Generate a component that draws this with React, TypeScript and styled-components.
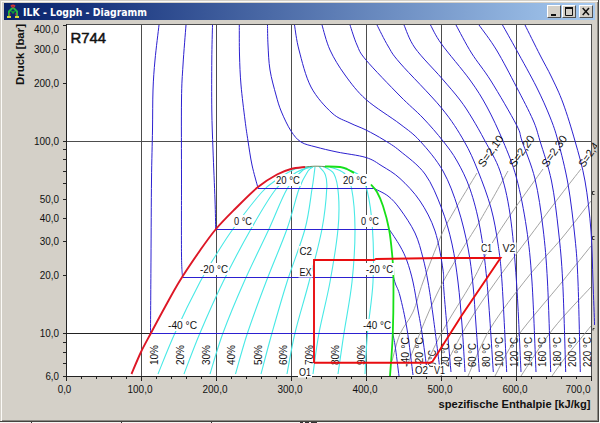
import React from 'react';
import styled, { createGlobalStyle } from 'styled-components';

const GlobalStyle = createGlobalStyle`
  html, body { margin: 0; padding: 0; }
  body { width: 600px; height: 423px; overflow: hidden; background: #f6f5f2; font-family: 'Liberation Sans', Arial, sans-serif; }
`;

const Desktop = styled.main`
  display: flex;
  flex-direction: column;
  width: 600px;
  height: 423px;
`;

const WindowFrame = styled.section`
  box-sizing: border-box;
  display: flex;
  flex-direction: column;
  width: 599px;
  height: 422px;
  padding: 2px 2px 0 3px;
  background: #d4d0c8;
  border-right: 1px solid #45433f;
  border-bottom: 1px solid #45433f;
  box-shadow: inset 1px 1px 0 #d4d0c8, inset 2px 2px 0 #fbfaf7, inset -1px -1px 0 #8c8983;
`;

const TitleBar = styled.header`
  box-sizing: border-box;
  display: flex;
  align-items: center;
  height: 17px;
  margin: 1px 1px 0;
  padding: 0 2px 0 3px;
  background: linear-gradient(90deg, #0a246a 0%, #14307a 12%, #a6caf0 100%);
`;

const Title = styled.h1`
  flex: 1;
  margin: 0 0 0 4px;
  color: #fff;
  font: bold 10px/16px 'DejaVu Sans', sans-serif;
`;

const TitleText = styled.svg`
  display: block;
  width: 140px;
  height: 16px;
`;

const Controls = styled.div`
  display: flex;
`;

const ControlButton = styled.button<{ $gap?: boolean }>`
  box-sizing: border-box;
  display: flex;
  width: 14px;
  height: 13px;
  margin: 0 0 0 ${(p) => (p.$gap ? '3px' : '1px')};
  padding: 0;
  border: 1px solid;
  border-color: #fff #505050 #505050 #fff;
  background: #d4d0c8;
`;

const Chart = styled.svg`
  display: block;
  width: 594px;
  height: 400px;
`;

const Footer = styled.svg`
  display: block;
  width: 600px;
  height: 1px;
`;

type Pt = [number, number];

/* Catmull-Rom spline through the sampled state points. */
const smooth = (pts: Pt[]): string => {
  let d = `M${pts[0][0]} ${pts[0][1]}`;
  for (let i = 0; i < pts.length - 1; i++) {
    const a = pts[i - 1] ?? pts[i];
    const b = pts[i];
    const c = pts[i + 1];
    const e = pts[i + 2] ?? c;
    d += `C${b[0] + (c[0] - a[0]) / 6} ${b[1] + (c[1] - a[1]) / 6} ${c[0] - (e[0] - b[0]) / 6} ${c[1] - (e[1] - b[1]) / 6} ${c[0]} ${c[1]}`;
  }
  return d;
};

const isotherms: Pt[][] = [
  [[159, 25], [155, 60], [153, 90], [152.5, 130], [151.5, 180], [151, 258], [150.5, 333]],
  [[186, 25], [183, 65], [181.5, 100], [181.5, 180], [181.5, 255], [182.5, 277]],
  [[212.5, 25], [211.8, 60], [211.8, 110], [213, 150], [215, 200], [215.7, 229]],
  [[239.3, 25], [239.5, 55], [241, 85], [245, 120], [248, 141], [252, 165], [258, 188]],
  [[267.5, 25], [268, 45], [270, 70], [276, 95], [281.5, 112], [291, 131], [301, 142], [316, 147], [337, 152], [366, 157.5], [382, 166], [400, 178.5], [420, 201], [435, 231], [443, 270], [444, 292], [451, 372]],
  [[294.5, 25], [299, 50], [311, 87], [332, 113], [350, 123], [366, 130], [384, 140], [400, 151], [425, 174], [441.5, 208], [452, 244], [458, 282], [462, 325], [465, 372]],
  [[322, 25], [330, 50], [345, 75], [366, 99.5], [400, 124], [420, 141], [443, 171], [458, 208], [468, 248], [473, 285], [476, 325], [479.3, 372]],
  [[350, 25], [357, 45], [366, 60], [400, 96], [423, 118], [443, 141], [457, 161], [470, 189], [480, 228], [487, 282], [493.3, 372]],
  [[377, 25], [388, 46], [400, 63], [441.5, 108], [464, 141], [478, 171], [491, 208], [498, 244], [502, 282], [506.7, 372]],
  [[404, 25], [415, 48], [441.5, 78], [460, 100], [472, 118], [485, 141], [500, 171], [510, 214], [516.5, 282], [521, 372]],
  [[430.5, 25], [441.5, 44], [470, 80], [487, 107], [503, 141], [516.5, 178], [526.5, 228], [532, 282], [536, 372]],
  [[456, 25], [471.5, 53], [491, 81], [516.5, 125], [522, 141], [535, 179], [543, 228], [547.5, 282], [550.7, 372]],
  [[479, 25], [496.5, 50], [516.5, 87], [533, 120], [540, 141], [551.5, 181], [558.5, 231], [562.7, 282], [565.7, 372]],
  [[502.5, 25], [516.5, 50], [536.5, 87], [550, 117], [558, 141], [568, 184], [575, 238], [578, 282], [580.3, 372]],
  [[525, 25], [540, 55], [551.5, 77], [563, 103], [575, 141], [585, 181], [591, 231], [593, 282], [594.6, 325]],
  [[373, 188], [388, 196], [400, 209], [415, 233], [423, 258], [428, 282], [433, 315], [440, 370]],
  [[389, 229], [400, 246], [407, 261], [413, 282], [418, 310], [422, 333], [427, 370]],
  [[393.5, 277], [395.5, 284], [400, 296], [407, 329], [413, 375]],
  [[392.5, 333], [395, 345], [399, 376]],
];

const qualities: Pt[][] = [
  [[309, 167], [295, 169], [278, 179], [262, 192], [233, 229], [216, 255], [200, 282], [175, 333], [158, 374]],
  [[311, 167], [297, 172], [276, 189], [251, 229], [223, 282], [200, 333], [184, 374]],
  [[312, 167], [303, 170], [287, 189], [269, 229], [244, 282], [223, 333], [210, 374]],
  [[313, 167], [308, 171], [299, 189], [287, 229], [266, 282], [247.5, 333], [235.5, 374]],
  [[315, 167], [314, 175], [312, 189], [305, 229], [287, 282], [272, 333], [261, 374]],
  [[319, 166.5], [325, 174], [326.8, 188], [322, 229], [309, 282], [295, 333], [287, 374]],
  [[323, 166.5], [334, 174], [338.5, 195], [338, 229], [330, 282], [319, 333], [313, 374]],
  [[330, 167], [344, 173], [351.5, 188], [355, 229], [352, 282], [344, 333], [338, 374]],
  [[340, 167], [359, 175], [367, 190], [372.5, 229], [373, 282], [367.5, 333], [365, 374]],
];

const isentropes: Pt[][] = [
  [[477, 173], [453, 213], [441, 236], [423, 282], [413, 312], [400, 334], [392, 361]],
  [[508, 171], [481, 219], [463, 248], [443, 282], [427, 316], [407, 366]],
  [[543, 169], [513, 211], [491, 245], [472, 282], [442, 332], [421, 376]],
  [[581, 169], [560, 196], [530, 236], [497, 280], [467, 325], [440, 376]],
  [[591, 201], [562, 238], [528, 277], [490, 329], [468, 376]],
  [[591, 246], [562, 282], [517, 337], [495, 376]],
  [[591, 287], [553, 329], [521, 376]],
  [[591, 326], [565, 358], [552, 376]],
];

const pressureTicks = [25, 49, 83, 141, 149.5, 159.5, 171.5, 183, 199, 218, 241, 275, 333, 342.5, 352.5, 363.5, 376];
const pressureLabels: [string, number][] = [
  ['400,0', 28.5], ['300,0', 49], ['200,0', 83], ['100,0', 141], ['50,0', 199], ['40,0', 218],
  ['30,0', 241], ['20,0', 275], ['10,0', 333], ['6,0', 376],
];
const enthalpyLabels: [string, number][] = [
  ['0,0', 64.5], ['100,0', 140], ['200,0', 215], ['300,0', 290], ['400,0', 365], ['500,0', 440], ['600,0', 515], ['700,0', 578],
];

/* text, left, baseline, width */
const temperatureLabels: [string, number, number, number][] = [
  ['20 °C', 276, 184, 24], ['20 °C', 343, 184, 24], ['0 °C', 234, 225, 18], ['0 °C', 361, 225, 18],
  ['-20 °C', 200, 273, 28], ['-40 °C', 168, 329, 29],
];
const saturatedVapourLabels: [string, number, number, number][] = [
  ['-20 °C', 366, 273, 27], ['-40 °C', 363, 329, 28],
];
const stateLabels: [string, number, number, number][] = [
  ['C2', 299.5, 255, 12.5], ['EX', 299.5, 275.5, 12], ['C1', 481, 252, 11], ['V2', 502.5, 251.5, 13],
  ['O1', 299, 375.5, 12], ['O2', 415, 374, 13], ['V1', 434, 373.5, 11],
];
const superheatLabels: [string, number, number][] = [
  ['-40 °C', 409, 30], ['-20 °C', 423, 30], ['0 °C', 436, 17], ['20 °C', 449, 24], ['40 °C', 462, 24], ['60 °C', 476, 24], ['80 °C', 490, 24],
  ['100 °C', 503, 30], ['120 °C', 517.5, 30], ['140 °C', 532, 30], ['160 °C', 546, 30], ['180 °C', 561, 30], ['200 °C', 576, 30], ['220 °C', 590.5, 30],
];
const entropyLabels: [string, number, number][] = [
  ['S=2,10', 483.5, 36], ['S=2,20', 514.5, 36], ['S=2,30', 547, 36], ['S=2,4', 584, 27],
];

const vertical = (x: number, y: number, angle = -90) => `translate(${x} ${y}) rotate(${angle})`;

const PlateLabel = ({ item: [t, x, y, w] }: { item: [string, number, number, number] }) => (
  <g>
    <rect x={x - 1} y={y - 10} width={w + 2} height="12" fill="#fff" />
    <text x={x} y={y} textLength={w} lengthAdjust="spacingAndGlyphs">{t}</text>
  </g>
);

const Diagram = () => (
  <Chart viewBox="3 20 594 400" fontFamily="'Liberation Sans', Arial, sans-serif" fontSize="11" fill="#111">
    <defs>
      <clipPath id="plot"><rect x="66" y="25" width="525" height="351" /></clipPath>
      <clipPath id="frame"><rect x="66" y="25" width="529" height="351" /></clipPath>
    </defs>
    <rect x="66" y="24" width="525" height="352" fill="#fff" />

    <g fill="none" stroke="#4d4d4d" shapeRendering="crispEdges">
      {[141.5, 216.5, 291.5, 366.5, 441.5, 516.5].map((x) => <path key={x} d={`M${x} 24V376`} />)}
      <path d="M66 141.5H591" />
      <path d="M66 333.5H591" stroke="#222" />
      <path d="M66 24.5H591.5V376" />
      <path d="M66.5 24V377M66 376.5H592" stroke="#222" />
    </g>

    <g clipPath="url(#plot)" fill="none" stroke="#999" strokeWidth="0.9">
      {isentropes.map((p, i) => <path key={i} d={smooth(p)} />)}
    </g>

    <g fill="none" stroke="#48e9e6" strokeWidth="1.1">
      {qualities.map((p, i) => <path key={i} d={smooth(p)} />)}
    </g>

    <g clipPath="url(#frame)" fill="none" stroke="#2c20d0" strokeWidth="1">
      {isotherms.map((p, i) => <path key={i} d={smooth(p)} />)}
    </g>
    <g fill="#2c20d0">
      <rect x="258" y="188" width="115" height="1" />
      <rect x="216" y="229" width="173" height="1" />
      <rect x="183" y="277" width="211" height="1" />
      <rect x="151" y="333" width="241" height="1" />
    </g>

    {temperatureLabels.map((item, i) => <PlateLabel key={i} item={item} />)}

    <path d={smooth([[131.5, 374], [141, 352], [151, 333], [165, 307], [180, 280.5], [200, 250.5], [216, 229], [235, 209], [258, 187], [277, 174.5], [291, 169], [305, 167]])} fill="none" stroke="#dd1726" strokeWidth="1.9" />
    <path d={smooth([[305, 167], [315, 166.2], [326, 166.6]])} fill="none" stroke="#668d62" strokeWidth="1" />
    <path d={smooth([[325, 166.5], [340, 167], [347, 169], [354, 173]])} fill="none" stroke="#17df17" strokeWidth="1.9" />
    <path d={smooth([[371, 184.5], [377, 192], [383, 206], [389, 229], [392, 253], [393.4, 277], [392.8, 333], [390, 376]])} fill="none" stroke="#17df17" strokeWidth="1.8" />
    {saturatedVapourLabels.map((item, i) => <PlateLabel key={i} item={item} />)}

    {[158, 183.5, 210, 235, 262, 287, 313, 339, 365].map((x, i) => (
      <text key={x} transform={vertical(x, 365)} textLength="20" lengthAdjust="spacingAndGlyphs">{`${(i + 1) * 10}%`}</text>
    ))}
    {superheatLabels.map(([t, x, w]) => (
      <text key={t} transform={vertical(x, 367)} textLength={w} lengthAdjust="spacingAndGlyphs">{t}</text>
    ))}
    {entropyLabels.map(([t, x, w]) => (
      <text key={t} transform={vertical(x, 168, -55)} textLength={w} lengthAdjust="spacingAndGlyphs">{t}</text>
    ))}
    <path d="M594.5 191.5H592.5V194.5H594.5M594.5 236.5H592.5V239.5H594.5M594.5 328.5H593V330.5" fill="none" stroke="#222" strokeWidth="0.9" />

    {stateLabels.map(([t, x, y, w]) => (
      <rect key={t} x={x - 1} y={y - 9} width={w + 2} height={11} fill="#fff" />
    ))}
    <path d="M314 363V260H374L376 259L441 258H500.5L462 315L432.5 361.5L430 362.7H314Z" fill="none" stroke="#e80d10" strokeWidth="1.9" />
    {stateLabels.map(([t, x, y, w]) => (
      <text key={t} x={x} y={y} textLength={w} lengthAdjust="spacingAndGlyphs">{t}</text>
    ))}

    <g fill="none" stroke="#222" shapeRendering="crispEdges">
      {pressureTicks.map((y) => <path key={y} d={`M63 ${Math.floor(y) + 0.5}H66`} />)}
      {Array.from({ length: 36 }, (_, i) => <path key={i} d={`M${66.5 + i * 15} 377v${i % 5 ? 2 : 4}`} />)}
    </g>
    {pressureLabels.map(([t, y]) => (
      <text key={t} x="59" y={y + 4} textAnchor="end" textLength={t.length * 5.7 - 3.5} lengthAdjust="spacingAndGlyphs">{t}</text>
    ))}
    {enthalpyLabels.map(([t, x]) => (
      <text key={t} x={x} y="393" textAnchor="middle" textLength={t.length * 5.7 - 3.5} lengthAdjust="spacingAndGlyphs">{t}</text>
    ))}
    <text x="70.5" y="43" fontSize="15" stroke="#111" strokeWidth="0.5" textLength="35.5" lengthAdjust="spacingAndGlyphs">R744</text>
    <text transform={vertical(24, 85)} fontSize="11.5" fontWeight="bold" textLength="61" lengthAdjust="spacingAndGlyphs">Druck [bar]</text>
    <text x="438.5" y="408" fontSize="11.5" fontWeight="bold" textLength="152" lengthAdjust="spacingAndGlyphs">spezifische Enthalpie [kJ/kg]</text>
  </Chart>
);

const AppIcon = () => (
  <svg width="12" height="15" viewBox="0 0 12 15" fill="none">
    <path d="M4 2.5Q6 .5 8 2.5M6 3V5" stroke="#d43434" strokeWidth="1.8" />
    <path d="M5.5 4L2 7.5V12M6.5 4L10 7.5V12" stroke="#23b540" strokeWidth="2" />
    <path d="M4.5 7L6 9L7.5 7" stroke="#159b36" strokeWidth="1.5" />
    <path d="M0 13H4M8 13H12" stroke="#d6d53b" strokeWidth="1.8" />
    <path d="M2.8 9V11.5M9 9V11.5" stroke="#d43434" strokeWidth="1" />
  </svg>
);

const App = () => (
  <Desktop>
    <GlobalStyle />
    <WindowFrame>
      <TitleBar>
        <AppIcon />
        <Title>
          <TitleText fill="#fff">
            <text x="0" y="12" textLength="124" lengthAdjust="spacingAndGlyphs">ILK - Logph - Diagramm</text>
          </TitleText>
        </Title>
        <Controls>
          <ControlButton aria-label="Minimize">
            <svg width="12" height="11"><rect x="3" y="8" width="5" height="2" fill="#111" /></svg>
          </ControlButton>
          <ControlButton aria-label="Maximize">
            <svg width="12" height="11" fill="none" stroke="#111"><path d="M2.5 2V9.5H9.5V2M2 2H10" /><path d="M2 2H10" strokeWidth="2" /></svg>
          </ControlButton>
          <ControlButton $gap aria-label="Close">
            <svg width="12" height="11"><path d="M2.7 2L9 9M9 2L2.7 9" stroke="#111" strokeWidth="1.5" /></svg>
          </ControlButton>
        </Controls>
      </TitleBar>
      <Diagram />
    </WindowFrame>
    <Footer shapeRendering="crispEdges">
      <path d="M31 .5h1M121 .5h1M211 .5h1M300 .5h3M305 .5h4M311 .5h6" stroke="#333" />
    </Footer>
  </Desktop>
);

export default App;
